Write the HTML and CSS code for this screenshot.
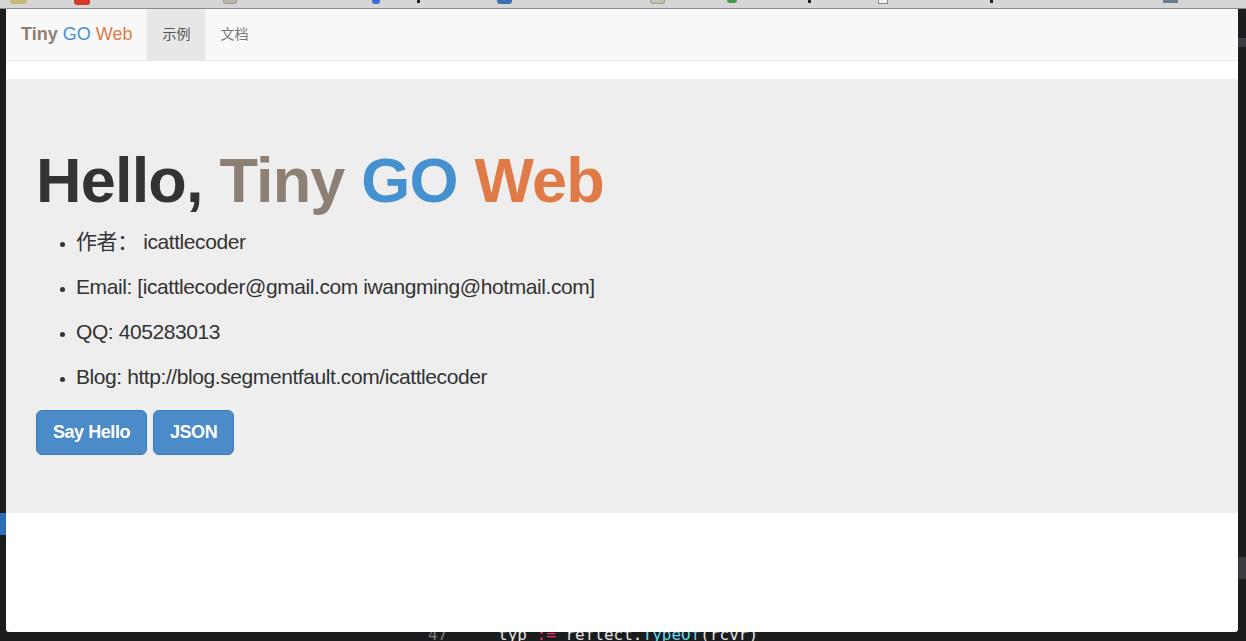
FILE: index.html
```html
<!DOCTYPE html>
<html lang="zh">
<head>
  <meta charset="UTF-8">
  <title>Tiny GO Web</title>
  <link rel="stylesheet" href="styles.css">
</head>
<body>
  <div class="tabstrip">
    <span class="fav fav-1"></span>
    <span class="fav fav-2"></span>
    <span class="fav fav-3"></span>
    <span class="fav fav-4"></span>
    <span class="fav fav-dot fav-5"></span>
    <span class="fav fav-6"></span>
    <span class="fav fav-7"></span>
    <span class="fav fav-8"></span>
    <span class="fav fav-dot fav-9"></span>
    <span class="fav fav-10"></span>
    <span class="fav fav-dot fav-11"></span>
    <span class="fav fav-12"></span>
  </div>

  <div class="desk">
    <div class="edge edge-left">
      <span class="edge-mark"></span>
    </div>

    <div class="window">
      <nav class="navbar">
        <a class="brand" href="#"><b class="c-tiny">Tiny</b> <span class="c-go">GO</span> <span class="c-web">Web</span></a>
        <ul class="nav">
          <li class="active"><a href="#">示例</a></li>
          <li><a href="#">文档</a></li>
        </ul>
      </nav>

      <div class="jumbotron">
        <h1>Hello, <span class="c-tiny">Tiny</span> <span class="c-go">GO</span> <span class="c-web">Web</span></h1>
        <ul class="info">
          <li><p>作者： icattlecoder</p></li>
          <li><p>Email: [icattlecoder@gmail.com iwangming@hotmail.com]</p></li>
          <li><p>QQ: 405283013</p></li>
          <li><p>Blog: http://blog.segmentfault.com/icattlecoder</p></li>
        </ul>
        <div class="actions">
          <button class="btn">Say Hello</button>
          <button class="btn">JSON</button>
        </div>
      </div>
    </div>

    <div class="edge edge-right">
      <span class="edge-mark mark-top"></span>
      <span class="edge-mark mark-low"></span>
    </div>
  </div>

  <div class="editor">
    <div class="code-line">
      <span class="line-no">47</span>
      <span class="code">typ <span class="op">:=</span> reflect.<span class="fn">TypeOf</span>(rcvr)</span>
    </div>
  </div>
</body>
</html>
```

FILE: styles.css
```css
:root {
  --brand-tiny: #8c8075;
  --brand-go: #4591cf;
  --brand-web: #e07b48;
  --text: #333;
  --desk: #1c1d1f;
}

* {
  box-sizing: border-box;
}

html, body {
  margin: 0;
  width: 1246px;
  height: 641px;
  overflow: hidden;
  background: var(--desk);
  font-family: "Liberation Sans", "Noto Sans CJK SC", Arial, sans-serif;
  color: var(--text);
}

/* browser chrome peeking in at the top */
.tabstrip {
  height: 9px;
  background: #d6d6d6;
  border-bottom: 1px solid #8a8a8a;
  display: flex;
  align-items: flex-start;
  overflow: hidden;
}

.fav {
  height: 4px;
  width: 14px;
  border-radius: 0 0 3px 3px;
}

.fav-dot { width: 3px; height: 3px; background: #222; border-radius: 0; }

.fav-1 { margin-left: 10px; width: 17px; background: #c9b877; }
.fav-2 { margin-left: 47px; width: 16px; height: 5px; background: #d33a2c; }
.fav-3 { margin-left: 133px; background: #bdb6a6; border: 1px solid #999; border-top: 0; }
.fav-4 { margin-left: 135px; width: 8px; background: #3a6fd8; }
.fav-5 { margin-left: 37px; }
.fav-6 { margin-left: 77px; width: 15px; background: #3c6fb4; }
.fav-7 { margin-left: 138px; width: 15px; background: #c7c2b4; border: 1px solid #999; border-top: 0; }
.fav-8 { margin-left: 62px; width: 10px; height: 3px; background: #3f9a45; }
.fav-9 { margin-left: 71px; }
.fav-10 { margin-left: 67px; width: 10px; background: #f2f2f2; border: 1px solid #888; border-top: 0; border-radius: 0; }
.fav-11 { margin-left: 102px; }
.fav-12 { margin-left: 170px; width: 15px; height: 3px; background: #6b7c8c; border-radius: 0; }

.desk {
  display: flex;
  height: 623px;
}

.edge {
  background: var(--desk);
  position: relative;
}

.edge-left {
  width: 6px;
}

.edge-right {
  width: 8px;
}

.edge-mark {
  position: absolute;
  left: 0;
}

.edge-left .edge-mark {
  top: 504px;
  width: 6px;
  height: 22px;
  background: #2d6db5;
}

.edge-right .edge-mark {
  width: 8px;
  background: #3a3b3e;
}

.mark-top {
  top: 29px;
  height: 9px;
}

.mark-low {
  top: 548px;
  height: 22px;
}

.window {
  flex: 1;
  background: #fff;
  border-radius: 0 0 3px 3px;
  overflow: hidden;
}

/* navbar */
.navbar {
  display: flex;
  height: 52px;
  background: #f8f8f8;
  border-bottom: 1px solid #e7e7e7;
  margin-bottom: 18px;
}

.brand {
  padding: 15px;
  font-size: 18px;
  line-height: 20px;
  text-decoration: none;
}

.nav {
  display: flex;
  list-style: none;
  margin: 0;
  padding: 0;
}

.nav a {
  display: block;
  padding: 15px;
  font-size: 14px;
  line-height: 21px;
  color: #777;
  text-decoration: none;
}

.nav .active a {
  background: #e7e7e7;
  color: #555;
}

.c-tiny { color: var(--brand-tiny); }
.c-go { color: var(--brand-go); }
.c-web { color: var(--brand-web); }

/* jumbotron */
.jumbotron {
  background: #eee;
  height: 434px;
  padding: 48px 30px 0 30px;
}

.jumbotron h1 {
  margin: 19px 0 12px;
  font-size: 63px;
  line-height: 1.1;
  font-weight: 700;
  letter-spacing: -0.8px;
  color: var(--text);
}

.info {
  margin: 0 0 18px;
  padding-left: 40px;
}

.info li p {
  margin: 0 0 15px;
  font-size: 21px;
  line-height: 30px;
  letter-spacing: -0.42px;
}

.actions {
  display: flex;
  gap: 6px;
}

.btn {
  padding: 10px 16px;
  font-family: inherit;
  font-size: 18px;
  line-height: 23px;
  font-weight: 700;
  letter-spacing: -0.45px;
  color: #fff;
  background: #4a8bc8;
  border: 1px solid #3b7ab8;
  border-radius: 6px;
  cursor: pointer;
}

/* editor peeking in under the window */
.editor {
  height: 9px;
  overflow: hidden;
  background: #1b1c1e;
}

.code-line {
  display: flex;
  margin-top: -6px;
  font-family: "DejaVu Sans Mono", "Liberation Mono", monospace;
  font-size: 16px;
  line-height: 18px;
  color: #e6e6e6;
}

.line-no {
  margin-left: 428px;
  width: 70px;
  color: #7c7c7c;
}

.op { color: #f92672; }
.fn { color: #66d9ef; }
```
